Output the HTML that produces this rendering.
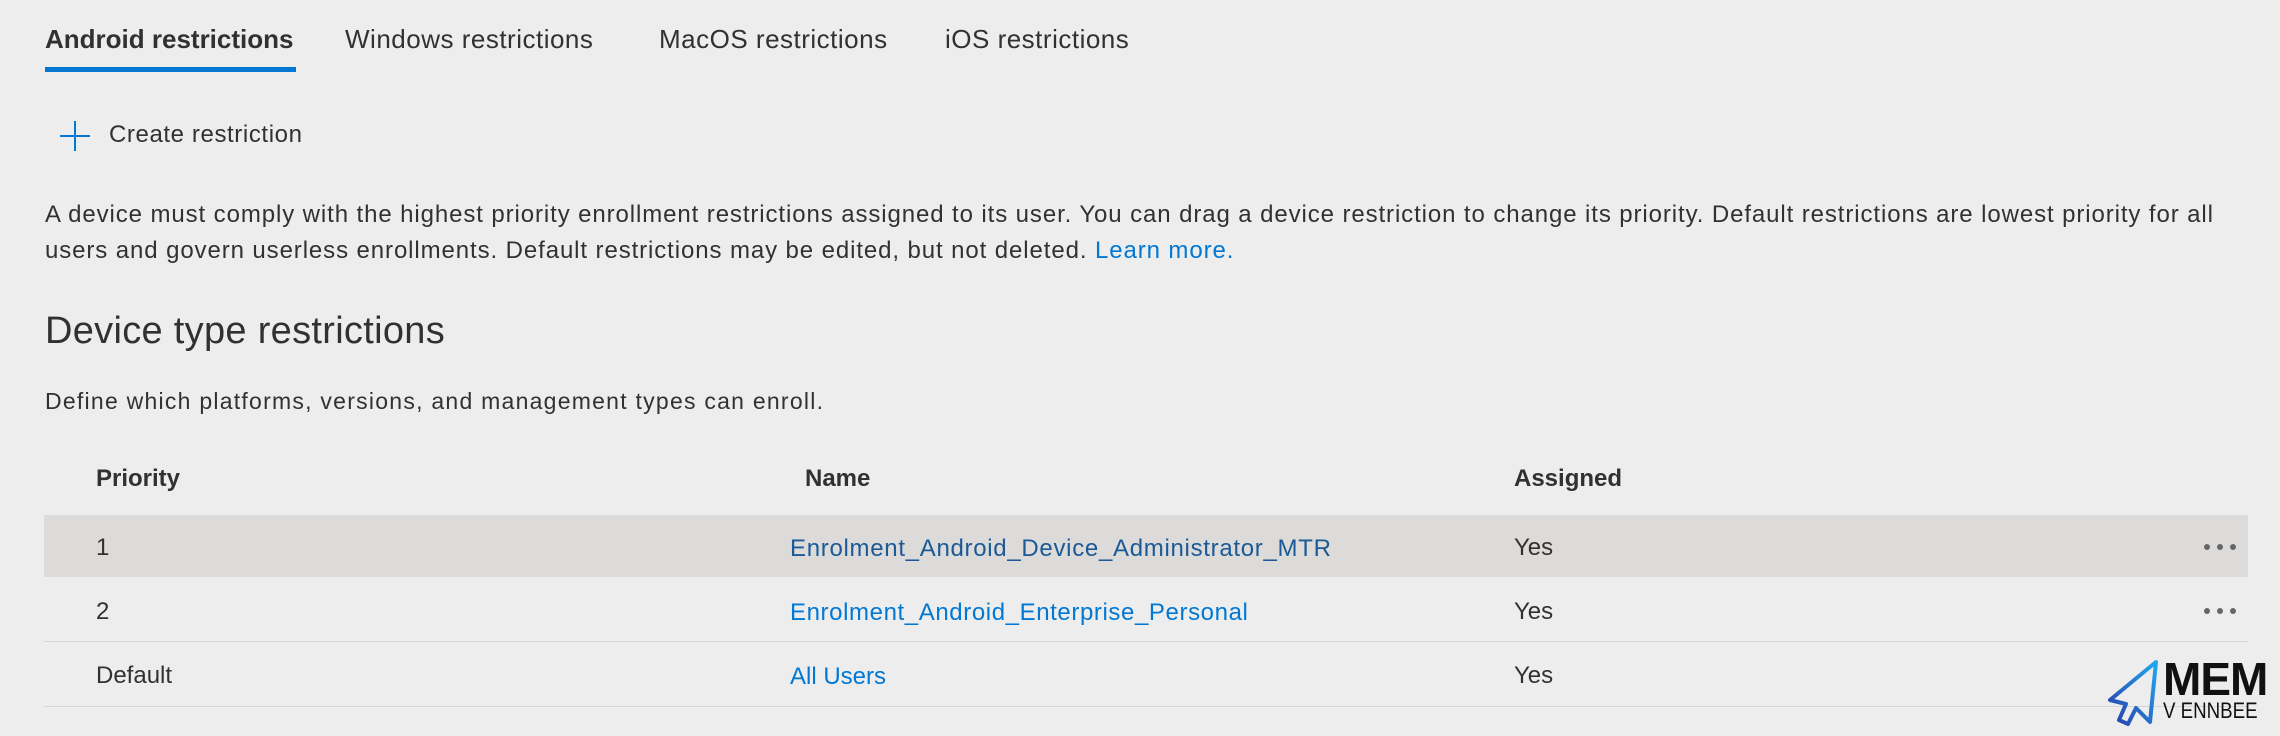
<!DOCTYPE html>
<html><head><meta charset="utf-8"><style>
html,body{margin:0;padding:0}
body{width:2280px;height:736px;background:#ededed;font-family:"Liberation Sans",sans-serif;color:#323130;position:relative;overflow:hidden}
.a{position:absolute;white-space:nowrap}
.tab{font-size:26px;top:24px;letter-spacing:0.5px}
.link{color:#0078d4}
.cell{font-size:24px}
.dots{position:absolute;width:32px;height:6px}
.dots i{position:absolute;top:0;width:6px;height:6px;border-radius:50%;background:#666}
</style></head><body>
<div class="a tab" style="left:45px;font-weight:bold;color:#323130;letter-spacing:0">Android restrictions</div>
<div class="a tab" style="left:345px">Windows restrictions</div>
<div class="a tab" style="left:659px">MacOS restrictions</div>
<div class="a tab" style="left:945px">iOS restrictions</div>
<div class="a" style="left:45px;top:67px;width:251px;height:5px;background:#0078d4"></div>

<div class="a" style="left:60px;top:135px;width:30px;height:2px;background:#0078d4"></div>
<div class="a" style="left:74px;top:121px;width:2px;height:30px;background:#0078d4"></div>
<div class="a" style="left:109px;top:121px;font-size:24px;letter-spacing:0.6px">Create restriction</div>

<div class="a" style="left:45px;top:197px;font-size:24px;line-height:36px;letter-spacing:0.9px">A device must comply with the highest priority enrollment restrictions assigned to its user. You can drag a device restriction to change its priority. Default restrictions are lowest priority for all<br>users and govern userless enrollments. Default restrictions may be edited, but not deleted. <span class="link">Learn more.</span></div>

<div class="a" style="left:45px;top:310px;font-size:38px;letter-spacing:0.3px">Device type restrictions</div>
<div class="a" style="left:45px;top:388px;font-size:23px;letter-spacing:1.25px">Define which platforms, versions, and management types can enroll.</div>

<div class="a cell" style="left:96px;top:465px;font-weight:bold">Priority</div>
<div class="a cell" style="left:805px;top:465px;font-weight:bold">Name</div>
<div class="a cell" style="left:1514px;top:465px;font-weight:bold">Assigned</div>

<div class="a" style="left:44px;top:515px;width:2204px;height:62px;background:#dcdbda"></div>
<div class="a cell" style="left:96px;top:534px">1</div>
<div class="a cell" style="left:790px;top:535px;color:#1b5a96;letter-spacing:0.7px">Enrolment_Android_Device_Administrator_MTR</div>
<div class="a cell" style="left:1514px;top:534px">Yes</div>
<div class="dots" style="left:2204px;top:544px"><i style="left:0"></i><i style="left:13px"></i><i style="left:26px"></i></div>

<div class="a cell" style="left:96px;top:598px">2</div>
<div class="a cell link" style="left:790px;top:599px;letter-spacing:0.6px">Enrolment_Android_Enterprise_Personal</div>
<div class="a cell" style="left:1514px;top:598px">Yes</div>
<div class="dots" style="left:2204px;top:608px"><i style="left:0"></i><i style="left:13px"></i><i style="left:26px"></i></div>
<div class="a" style="left:44px;top:641px;width:2204px;height:1px;background:#d6d6d6"></div>

<div class="a cell" style="left:96px;top:662px">Default</div>
<div class="a cell link" style="left:790px;top:663px">All Users</div>
<div class="a cell" style="left:1514px;top:662px">Yes</div>
<div class="a" style="left:44px;top:706px;width:2204px;height:1px;background:#d6d6d6"></div>

<svg class="a" style="left:2104px;top:658px" width="62" height="70" viewBox="0 0 62 70">
<defs><linearGradient id="g" x1="0" y1="1" x2="1" y2="0"><stop offset="0" stop-color="#2a3fa8"/><stop offset="1" stop-color="#20a8f0"/></linearGradient></defs>
<path d="M52 4 L6 42 L22 46 L15 62 L24 66 L32 50 L46 64 Z" fill="none" stroke="url(#g)" stroke-width="4" stroke-linejoin="round"/>
</svg>
<div class="a" style="left:2163px;top:656px;font-size:46px;font-weight:bold;color:#111;letter-spacing:-1px;line-height:46px">MEM</div>
<div class="a" style="left:2163px;top:700px;font-size:22px;color:#111;line-height:22px;transform:scaleX(0.85);transform-origin:left">V ENNBEE</div>
</body></html>
